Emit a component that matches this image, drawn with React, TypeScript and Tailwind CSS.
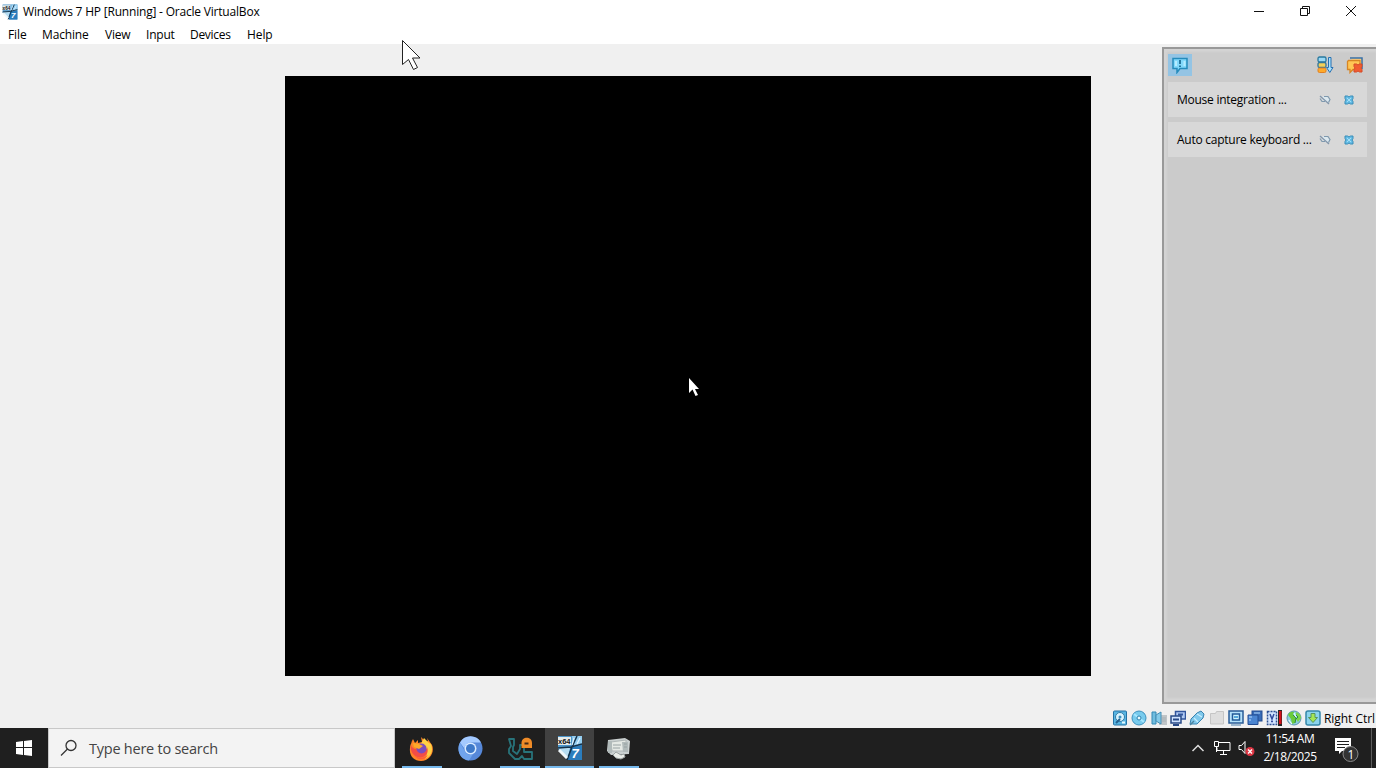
import type { ReactNode } from "react";

function VmIcon({ size }: { size: number }) {
  return (
    <svg width={size} height={size} viewBox="0 0 26 26" className="shrink-0">
      <path d="M1 1h24v24H12L1 14z" fill="#4b94c8" />
      <path d="M1 13l13-1-4 12z" fill="#b5dcf2" />
      <path d="M15 1h10v9l-9 2z" fill="#93cdf0" />
      <path d="M13 13l12-3v15H11z" fill="#2b7dbd" />
      <path d="M20 1l-5 11-5 13M1 13l13-1 11-3" stroke="#14324b" strokeWidth="1.500" fill="none" />
      <path d="M2 15l8 8" stroke="#f0f8fc" strokeWidth="3" />
      <path d="M17 3l-2 7M23 3l-3 6" stroke="#dff3ff" strokeWidth="1.200" />
      <path d="M1 2h13v8H1z" fill="#e6ebea" />
      <text x="1" y="9" fontSize="7.500" fontWeight="700" fontFamily="Liberation Sans, sans-serif" fill="#111">x64</text>
      <text x="14.500" y="22.500" fontSize="13" fontWeight="700" fontStyle="italic" fontFamily="Liberation Sans, sans-serif" fill="#fff">7</text>
    </svg>
  );
}

function Pin() {
  return (
    <svg width="12" height="10" viewBox="0 0 12 10" fill="none">
      <path d="M3.500 1.500h4l3.500 3.500-2 3-3-1-3-3z" fill="#dce9f0" />
      <path d="M1 1l9 8" stroke="#8496aa" strokeWidth="1.4" />
      <path d="M5 1.500h4l2 3-1.500 3M1 3.500l2 3h3" stroke="#7f99ae" strokeWidth="1.200" />
    </svg>
  );
}

function Cross() {
  return (
    <svg width="10" height="10" viewBox="0 0 10 10">
      <path d="M1 1h2.5L5 2l1.500-1H9v2.500L8 5l1 1.500V9H6.500L5 8 3.500 9H1V6.500L2 5 1 3.500z" fill="#65bce5" stroke="#388db8" />
      <path d="M3 3l4 4M7 3L3 7" stroke="#a4e0f8" />
    </svg>
  );
}

function Notice({ children }: { children: ReactNode }) {
  return (
    <div className="flex h-[35px] items-center bg-[#d8d8d8] pl-[9px]">
      <span className="w-[142px] whitespace-nowrap text-[12px] tracking-[-0.25px]">{children}</span>
      <Pin />
      <span className="ml-[13px]"><Cross /></span>
    </div>
  );
}

function Sq({ children }: { children: ReactNode }) {
  return (
    <svg width="16" height="16" viewBox="0 0 16 16" fill="none" className="shrink-0">{children}</svg>
  );
}

function StatusIcons() {
  return (
    <div className="flex gap-[3.3px]">
      <Sq>
        <rect x="1.500" y="1" width="13" height="14" rx="1" fill="#58b5e2" stroke="#2472a5" />
        <circle cx="8" cy="7" r="4.500" fill="#d9f4ff" stroke="#337ba6" />
        <circle cx="8" cy="7" r="1.500" fill="#3b91bf" />
        <path d="M4 13l4-4" stroke="#235f8d" strokeWidth="2" />
        <path d="M10 12.500h3" stroke="#e5faff" strokeWidth="2" />
      </Sq>
      <Sq>
        <circle cx="8" cy="8" r="7" fill="#78cbed" stroke="#3c91bf" />
        <path d="M8 8L3 4M8 8l5 4" stroke="#a5e6ff" strokeWidth="2" />
        <circle cx="8" cy="8" r="2" fill="#e9faff" stroke="#2b81ae" />
      </Sq>
      <Sq>
        <rect x="8" y="5" width="8" height="10" fill="#bfc4c7" />
        <path d="M1 2h4v12H1z" fill="#71bddf" stroke="#3589b5" />
        <path d="M5 5l5-3v12l-5-3z" fill="#85cbe9" stroke="#468eb5" />
        <path d="M12 7v5M14 7v5" stroke="#a7b0b5" />
      </Sq>
      <Sq>
        <rect x="5.500" y="1.500" width="10" height="7.500" fill="#b0c9f3" stroke="#31549c" strokeWidth="1.500" />
        <path d="M8 4.500h5" stroke="#31549c" strokeWidth="2" />
        <rect x="1" y="6" width="10" height="7" fill="#cfe2ff" stroke="#284987" strokeWidth="1.500" />
        <path d="M3 9.500h6M3 15h6" stroke="#284987" strokeWidth="2" />
      </Sq>
      <Sq>
        <path d="M1 14l1-5 6-6 4-2 3 3-1 4-6 6z" fill="#80c9ec" stroke="#3982af" />
        <path d="M5 8l4 4M8 4l5 3" stroke="#c9efff" strokeWidth="1.200" />
        <path d="M1 15l4-4" stroke="#4b829e" strokeWidth="1.500" />
      </Sq>
      <Sq>
        <path d="M1.500 3.500h5l1-2h7v12.500h-13z" fill="#dedede" stroke="#c5c5c5" />
      </Sq>
      <Sq>
        <rect x="1" y="1" width="14" height="12" fill="#b4e1fa" stroke="#285b96" strokeWidth="1.500" />
        <rect x="4.500" y="4" width="7" height="6" fill="#cff5ff" stroke="#225a98" strokeWidth="1.500" />
        <path d="M6 7h4" stroke="#55a8dc" strokeWidth="2" />
        <path d="M3 15h10" stroke="#487eac" />
      </Sq>
      <Sq>
        <rect x="5" y="1" width="10" height="10" fill="#376cb8" stroke="#244c90" />
        <path d="M1 5h10v9.500H1z" fill="#4a85d1" stroke="#234c92" />
        <path d="M2 7h3M2 10h2M7 3h6" stroke="#b5dcff" />
      </Sq>
      <Sq>
        <rect x="1.500" y="1.500" width="9" height="13" fill="#d3e5ff" stroke="#2b4f92" strokeWidth="1.500" strokeDasharray="2 1" />
        <path d="M4 4l2 5 2-5M5 11.500h2" stroke="#334b9b" strokeWidth="1.500" />
        <path d="M12 0h4v16h-4z" fill="#252525" />
        <path d="M13 1h2.500v13H13z" fill="#d31018" />
      </Sq>
      <Sq>
        <circle cx="8" cy="8" r="7" fill="#8bcde0" stroke="#5b94ae" />
        <path d="M2 5c1-3 4-4 6-3L7 5l3 3-1 5-3 1-1-5z" fill="#6acb3c" />
        <path d="M10 2c3 1 5 3 5 6l-3 4-2-3 2-2-2-2z" fill="#7bd44d" />
        <path d="M7 5l3 3-1 5M10 5l2 2-2 2" stroke="#2d8d38" />
        <path d="M3 10c1 2 2 3 3 4M8 3l2 4" stroke="#e3faff" strokeWidth="1.200" />
      </Sq>
      <Sq>
        <rect x="1" y="1" width="14" height="14" rx="2" fill="#8bd4ed" stroke="#3687a9" strokeWidth="1.500" />
        <path d="M6 3.500h4v4h2.500L8 12.500 3.500 7.500H6z" fill="#a5e653" stroke="#57965b" />
      </Sq>
    </div>
  );
}

function TaskButton({ children, running, active }: { children: ReactNode; running?: boolean; active?: boolean }) {
  return (
    <div className={`flex h-10 w-[49.3px] flex-col items-center ${active ? "bg-[#414141]" : ""}`}>
      <div className="flex h-[38px] w-full items-center justify-center pt-[2px]">{children}</div>
      <div className={`h-[2px] ${active ? "w-full" : "w-10"} ${running ? "bg-[#76b9ed]" : ""}`} />
    </div>
  );
}

function Firefox() {
  return (
    <svg width="25" height="25" viewBox="0 0 25 25">
      <path d="M2 7l2-4 2 4 3-3v3l4-1-1-5 5 5 2-1-1-3 5 7c3 7-2 16-11 16C5 25 0 20 1 12c0-3 1-5 3-7z" fill="#ff8427" />
      <path d="M15 2l5 5 2 1c3 8-1 13-6 15 5-7 0-14-4-15z" fill="#ffd044" />
      <path d="M2 9c1 4 5 4 8 5 4 2 8 0 8-3 3 7-4 12-9 10-5-1-8-6-7-12z" fill="#f34d46" />
      <circle cx="12.500" cy="12.500" r="5" fill="#7b4dbd" />
      <path d="M4 7l6 1 4 2-4 3-5-2z" fill="#ffa928" />
      <path d="M4 17c4 6 10 6 15 2-4 7-12 5-15-2z" fill="#ff5d39" />
    </svg>
  );
}

function Chromium() {
  return (
    <svg width="25" height="25" viewBox="0 0 25 25">
      <circle cx="12.500" cy="12.500" r="12" fill="#5688d9" />
      <path d="M2 6.500A12 12 0 0 1 23 6.500H12.500a6 6 0 0 0-6 6z" fill="#a4caff" />
      <path d="M2 6.500l5 9c2 4 7 4 9 1l-5 8C2 24-2 14 2 6.500z" fill="#70a4ed" />
      <circle cx="12.500" cy="12.500" r="6" fill="#d8eaff" />
      <circle cx="12.500" cy="12.500" r="4.500" fill="#3e79c9" />
    </svg>
  );
}

function VirtViewer() {
  return (
    <svg width="26" height="25" viewBox="0 0 26 25" fill="none">
      <path d="M2 3h5v6l-1 2v4l4 3 3-5V9h4v7h8v7h-8l-2-3-3 3H8l-6-6v-4l2-3z" stroke="#28737a" strokeWidth="1.800" strokeLinejoin="round" />
      <path d="M14.500 12V7c0-7 10.500-7 10.500 0v5z" fill="#ef8b27" />
      <path d="M17.500 6.500h4v2h-4z" fill="#442917" />
    </svg>
  );
}

function ToolIcon() {
  return (
    <svg width="25" height="23" viewBox="0 0 25 23">
      <path d="M2 3l17-2 5 3-1 13-18 1-4-4z" fill="#cbd1d1" />
      <path d="M5 5l15-2v11H6z" fill="#e5e9e5" stroke="#b0b7b7" />
      <path d="M2 4h4v12H2zM16 5h6v10h-5z" fill="#b1baba" />
      <path d="M7 8h8M7 11h7M18 7h3M18 10h3" stroke="#98a2a3" />
      <path d="M10 15l5 3 3-1 1 3-4 2-5-1-3-3z" fill="#e9ece8" stroke="#9ba2a1" />
    </svg>
  );
}

export default function App() {
  return (
    <div className="relative flex h-[768px] w-[1376px] flex-col overflow-hidden bg-[#f0f0f0] font-['Open_Sans','Noto_Sans',sans-serif] text-black">
      <header className="h-[44px] shrink-0 bg-white">
        <div className="flex h-6 items-center pl-[2px]">
          <VmIcon size={16} />
          <span className="ml-[5px] whitespace-nowrap text-[12px] tracking-[-0.2px]">Windows 7 HP [Running] - Oracle VirtualBox</span>
          <div className="ml-auto flex items-center gap-[34px] pr-[19px] pb-[3px]">
            <svg width="12" height="12" viewBox="0 0 12 12"><path d="M1 6.500h10" stroke="#111" /></svg>
            <svg width="12" height="12" viewBox="0 0 12 12" fill="none" stroke="#111"><path d="M1.500 3.500h7v7h-7zM3.500 3.500v-2h7v7h-2" /></svg>
            <svg width="12" height="12" viewBox="0 0 12 12"><path d="M1 1l10 10M11 1L1 11" stroke="#111" /></svg>
          </div>
        </div>
        <nav className="flex h-5 items-center gap-4 pl-2 pt-[2px] text-[12px] whitespace-nowrap">
          <span className="w-[18px] tracking-[-0.1px]">File</span>
          <span className="w-[47px] tracking-[-0.15px]">Machine</span>
          <span className="w-[25px] tracking-[-0.2px]">View</span>
          <span className="w-[28px] tracking-[-0.2px]">Input</span>
          <span className="w-[41px] tracking-[-0.3px]">Devices</span>
          <span className="w-[25px] tracking-[-0.1px]">Help</span>
        </nav>
      </header>
      <main className="flex h-[664px] shrink-0 pt-[3px]">
        <div className="ml-[285px] mt-[29px] h-[600px] w-[806px] bg-black" />
        <aside className="ml-[71px] h-[657px] w-[214px] border-y-2 border-l-2 border-[#999] bg-[#cbcbcb] pl-[5px] shadow-[inset_3px_3px_2px_#d3d3d3,inset_0_-4px_2px_#d3d3d3]">
          <div className="flex h-[33px] items-center pb-[2px]">
            <div className="-ml-px flex h-[22px] w-6 items-center justify-center bg-[#94c4e4]">
              <svg width="18" height="18" viewBox="0 0 18 18">
                <path d="M2 2.500h14v10H9l-3 4v-4H2z" fill="#82d9fb" stroke="#258bbb" strokeWidth="1.500" />
                <path d="M5 5v5M13.500 5v5" stroke="#b5ecff" strokeWidth="2" />
                <path d="M9 4v4M9 9.500v1.500" stroke="#18678f" strokeWidth="1.700" />
              </svg>
            </div>
            <svg className="ml-[124px]" width="18" height="18" viewBox="0 0 18 18">
              <rect x="2" y="1" width="8" height="5" rx="1.500" fill="#9bd8f5" stroke="#28799f" strokeWidth="1.300" />
              <rect x="2" y="6.500" width="8" height="5" rx="1.500" fill="#f3d058" stroke="#31769b" strokeWidth="1.300" />
              <rect x="2" y="12" width="8" height="4.500" rx="1.500" fill="#ffaa29" stroke="#e18022" />
              <path d="M12.500 1.500h2.500v10h2l-3.200 5-3.300-5h2z" fill="#a8dffb" stroke="#2770b1" />
            </svg>
            <svg className="ml-3" width="18" height="18" viewBox="0 0 18 18">
              <path d="M4 2h12v11" fill="#ffd48b" stroke="#3970a6" strokeWidth="1.500" />
              <path d="M2.500 4.500h11.500v9H7l-3 3v-3H1.500v-8z" fill="#ffc655" stroke="#d88524" strokeWidth="1.300" />
              <path d="M8 8h2.500l1.500 1 1.500-1H16v2.500L15 12l1 1.500V16h-2.500L12 15l-1.500 1H8v-2.500L9 12l-1-1.500z" fill="#f15c31" stroke="#d44b29" />
            </svg>
          </div>
          <div className="flex w-[198px] flex-col gap-[5px]">
            <div className="-mr-px -translate-x-px"><Notice>Mouse integration ...</Notice></div>
            <div className="-mr-px -translate-x-px"><Notice>Auto capture keyboard ...</Notice></div>
          </div>
        </aside>
      </main>
      <div className="flex h-5 shrink-0 items-center justify-end whitespace-nowrap text-[12px]">
        <StatusIcons />
        <span className="ml-[3px] w-[52px] pt-px tracking-[-0.05px]">Right Ctrl</span>
      </div>
      <footer className="flex h-10 shrink-0 bg-[#1f1f1f] text-white">
        <div className="flex w-12 items-center justify-center">
          <svg width="18" height="18" viewBox="0 0 18 18" fill="#fff"><path d="M1 3l7-1v6H1zM9 2l8-1v7H9zM1 9h7v7l-7-1zM9 9h8v8l-8-1z" /></svg>
        </div>
        <div className="flex w-[347px] items-center border border-[#c8c8c8] bg-[#f3f3f3] pl-[11px] text-[#444]">
          <svg width="18" height="18" viewBox="0 0 18 18" fill="none" stroke="#333" strokeWidth="1.300"><circle cx="11" cy="6.500" r="5" /><path d="M7.500 10L1 16.500" /></svg>
          <span className="ml-[11px] pt-px text-[14.5px] tracking-[-0.24px]">Type here to search</span>
        </div>
        <div className="ml-[2px] flex">
          <TaskButton running><Firefox /></TaskButton>
          <TaskButton><Chromium /></TaskButton>
          <TaskButton running><VirtViewer /></TaskButton>
          <TaskButton running active><VmIcon size={26} /></TaskButton>
          <TaskButton running><ToolIcon /></TaskButton>
        </div>
        <div className="ml-auto flex items-center">
          <svg width="14" height="10" viewBox="0 0 14 10" fill="none" stroke="#ddd" strokeWidth="1.500"><path d="M1.500 8L7 2.500 12.500 8" /></svg>
          <svg className="ml-[8px]" width="18" height="18" viewBox="0 0 18 18" fill="none" stroke="#fff"><path d="M6 3.500h11v8H4v-3M1.500 2.500h4v5h-4zM3.500 8v5M10.500 12v3M7 15.500h7" /></svg>
          <svg className="ml-1.5" width="18" height="18" viewBox="0 0 18 18" fill="none"><path d="M2 6.500h2.500l3.500-4v12l-3.500-4H2z" stroke="#fff" /><circle cx="13" cy="12.500" r="4.500" fill="#dc3543" /><path d="M11 10.500l4 4M15 10.500l-4 4" stroke="#fff" strokeWidth="1.300" /></svg>
          <div className="ml-[6px] flex w-[58px] flex-col items-center whitespace-nowrap text-[12px] leading-[18px]">
            <span className="tracking-[-0.4px]">11:54 AM</span>
            <span className="tracking-[-0.4px]">2/18/2025</span>
          </div>
          <svg className="ml-[14px]" width="27" height="28" viewBox="0 0 27 28">
            <path d="M2 4h16v13h-9l-3 3v-3H2z" fill="#fff" />
            <path d="M4 7.500h12M4 10.500h12M4 13.500h8" stroke="#1f1f1f" />
            <circle cx="17.500" cy="20" r="7.500" fill="#333" stroke="#8a8a8a" />
            <text x="14.500" y="24.500" fontSize="12" fill="#fff" fontFamily="Open Sans, sans-serif">1</text>
          </svg>
          <div className="ml-[11px] mr-[4px] h-10 w-px bg-[#5c5c5c]" />
        </div>
      </footer>
      <svg className="absolute left-[401px] top-[39px]" width="22" height="33" viewBox="0 0 22 33"><path d="M1.500 1.500v24l6-5 5 10 4-2-5-9.500h7.500z" fill="#fff" stroke="#222" /></svg>
      <svg className="absolute left-[688px] top-[377px]" width="12" height="20" viewBox="0 0 12 20"><path d="M1 1v15l3.500-3.500L7.500 19l2.500-1-3-6h4z" fill="#fff" /></svg>
    </div>
  );
}
